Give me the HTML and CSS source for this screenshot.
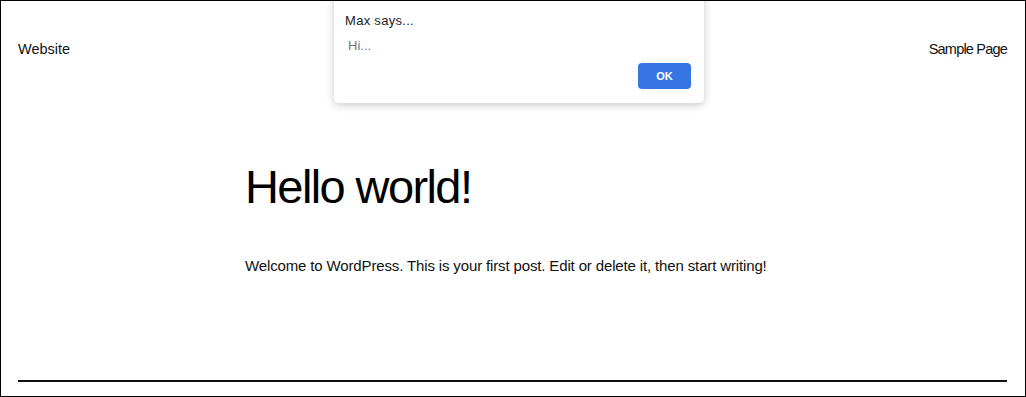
FILE: index.html
```html
<!DOCTYPE html>
<html lang="en">
<head>
    <meta charset="UTF-8">
    <meta name="viewport" content="width=device-width, initial-scale=1.0">
    <title>Website</title>
    <link rel="stylesheet" href="styles.css">
</head>
<body>
    <div class="frame">
        <header class="site-header">
            <a href="#" class="site-title">Website</a>
            <nav>
                <a href="#" class="nav-link">Sample Page</a>
            </nav>
        </header>

        <main class="post">
            <h1>Hello world!</h1>
            <p>Welcome to WordPress. This is your first post. Edit or delete it, then start writing!</p>
        </main>

        <footer class="site-footer"></footer>

        <!-- alert dialog sits on top of the page -->
        <div class="dialog">
            <div class="dialog-title">Max says...</div>
            <div class="dialog-msg">Hi...</div>
            <div class="dialog-actions">
                <button class="ok-btn">OK</button>
            </div>
        </div>
    </div>
</body>
</html>
```

FILE: styles.css
```css
* {
    margin: 0;
    padding: 0;
    box-sizing: border-box;
}

body {
    font-family: "Liberation Sans", Arial, sans-serif;
    background-color: #fff;
    color: #111;
}

.frame {
    position: relative;
    width: 1026px;
    height: 397px;
    border: 1px solid #000;
    display: flex;
    flex-direction: column;
    overflow: hidden;
}

.site-header {
    display: flex;
    justify-content: space-between;
    align-items: center;
    padding: 38px 18px 0 17px;
    height: 58px;
}

.site-header a {
    color: #111;
    text-decoration: none;
    font-size: 14.5px;
    line-height: 20px;
}

.nav-link {
    letter-spacing: -0.8px;
}

.post {
    width: 536px;
    margin: 0 auto;
    padding-top: 100px;
}

.post h1 {
    font-weight: 400;
    font-size: 47px;
    line-height: 56px;
    letter-spacing: -1.6px;
    color: #000;
}

.post p {
    margin-top: 40px;
    font-size: 15px;
    line-height: 22px;
    letter-spacing: -0.14px;
    white-space: nowrap;
}

.site-footer {
    margin: auto 18px 14px 17px;
    border-top: 2px solid #111;
}

.dialog {
    position: absolute;
    top: -6px;
    left: 333px;
    width: 370px;
    height: 108px;
    background-color: #fff;
    border-radius: 5px;
    box-shadow: 0 2px 8px rgba(0, 0, 0, 0.22);
    padding: 17px 13px 0 11px;
    font-size: 13px;
}

.dialog-title {
    color: #222;
    line-height: 18px;
    letter-spacing: 0.3px;
}

.dialog-msg {
    color: #777;
    line-height: 18px;
    margin-top: 7px;
    padding-left: 3px;
}

.dialog-actions {
    display: flex;
    justify-content: flex-end;
    margin-top: 8px;
}

.ok-btn {
    width: 53px;
    height: 26px;
    border: none;
    border-radius: 4px;
    background-color: #3576e2;
    color: #fff;
    font-family: inherit;
    font-weight: 700;
    font-size: 11px;
}
```
